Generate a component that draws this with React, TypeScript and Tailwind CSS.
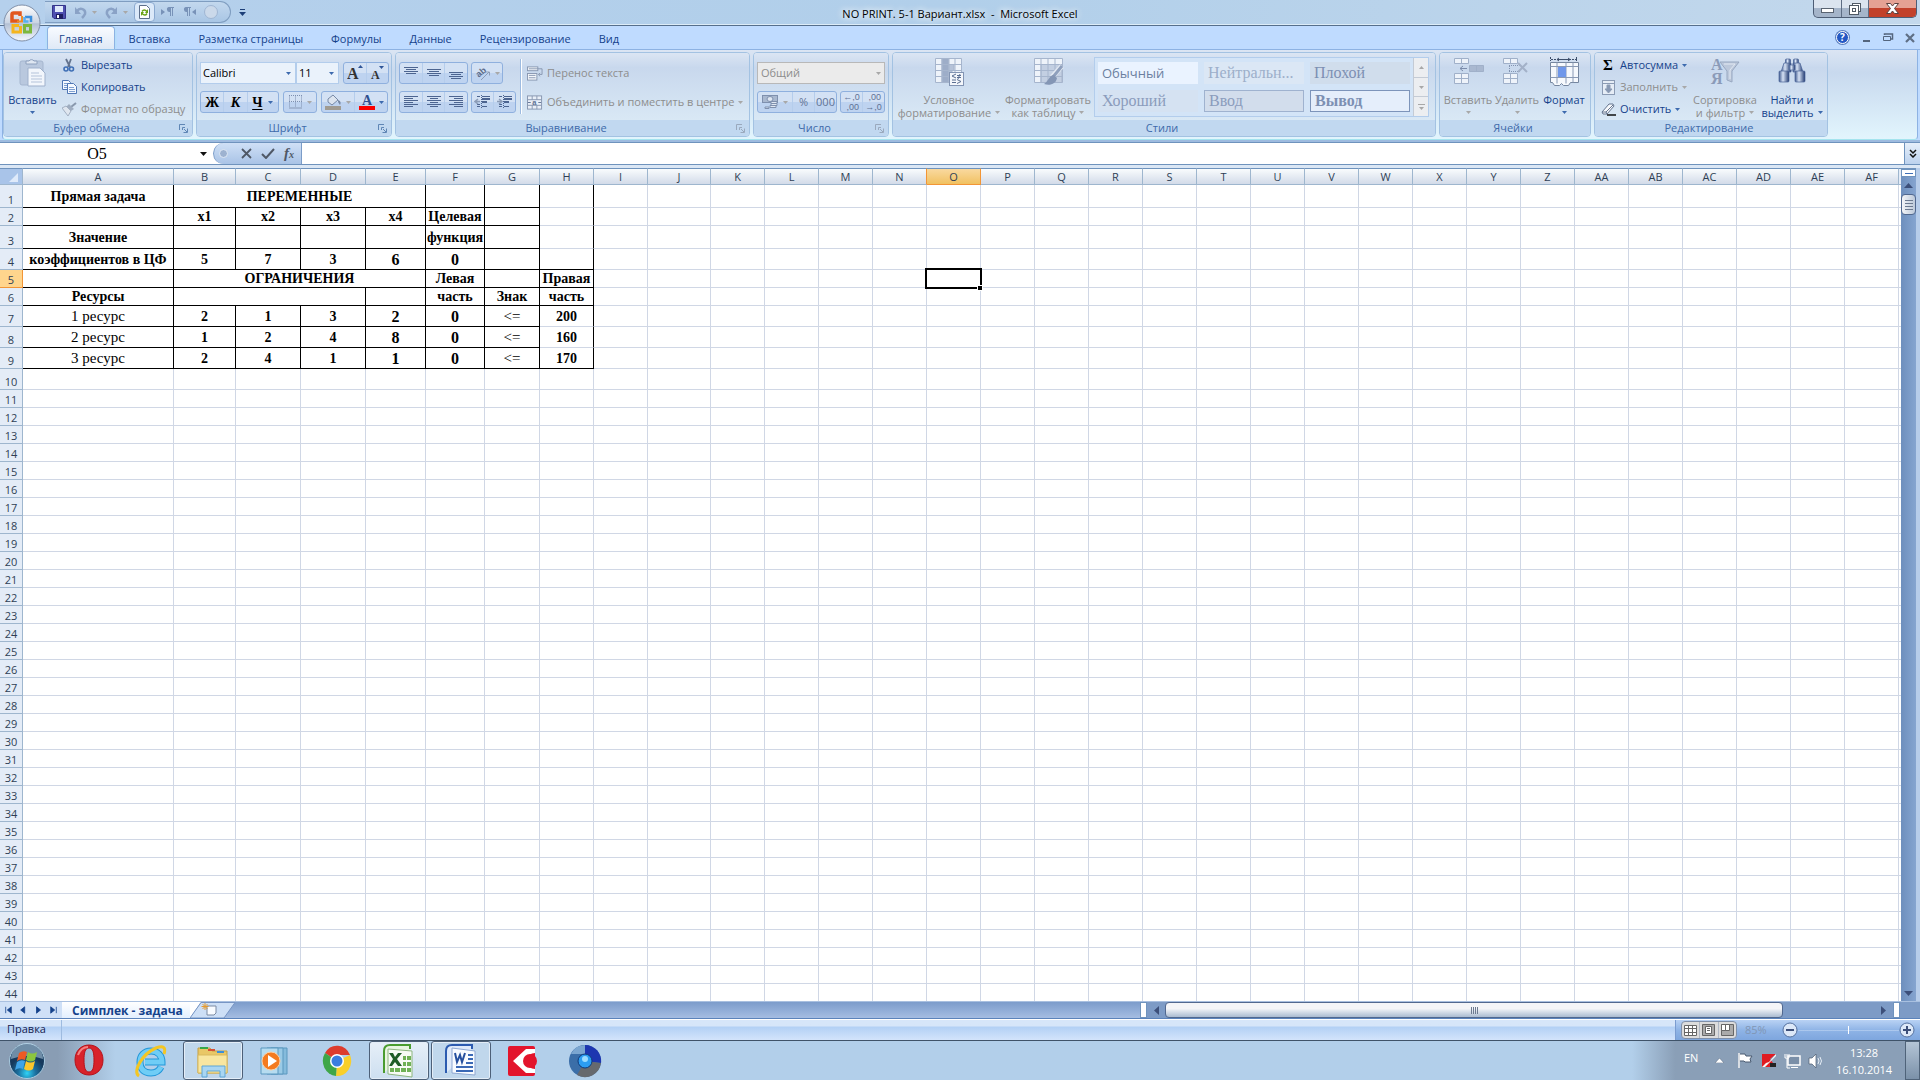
import React, { useState } from "react";
import { clsx } from "clsx";

type CellData = {
  text?: string;
  span?: number;
  r?: boolean;
  b?: boolean;
  plain?: boolean;
  big?: boolean;
};

const COLUMNS = [
  "A", "B", "C", "D", "E", "F", "G", "H", "I", "J", "K", "L", "M", "N", "O", "P",
  "Q", "R", "S", "T", "U", "V", "W", "X", "Y", "Z", "AA", "AB", "AC", "AD", "AE", "AF",
];

const COLUMN_WIDTHS: Record<string, string> = {
  A: "w-[151px]",
  B: "w-[62px]",
  C: "w-[65px]",
  D: "w-[65px]",
  E: "w-[60px]",
  F: "w-[59px]",
  G: "w-[55px]",
  J: "w-[63px]",
};

const ROW_HEIGHTS: Record<number, string> = {
  1: "h-[23px]",
  3: "h-[23px]",
  4: "h-[21px]",
  7: "h-[21px]",
  8: "h-[21px]",
  9: "h-[21px]",
  10: "h-[21px]",
};

// boxed cell: black line on the right and at the bottom
const box = (text = "", extra: Partial<CellData> = {}): CellData => ({ text, r: true, b: true, ...extra });

const DATA: Record<number, CellData[]> = {
  1: [box("Прямая задача"), box("ПЕРЕМЕННЫЕ", { span: 4 }), box(), box(), { r: true }],
  2: [box(), box("x1"), box("x2"), box("x3"), box("x4"), box("Целевая"), box(), { r: true }],
  3: [box("Значение"), box(), box(), box(), box(), box("функция"), box(), { r: true }],
  4: [box("коэффициентов в ЦФ"), box("5"), box("7"), box("3"), box("6", { big: true }), box("0", { big: true }), box(), box()],
  5: [box(), box("ОГРАНИЧЕНИЯ", { span: 4 }), box("Левая"), box(), box("Правая")],
  6: [box("Ресурсы"), box("", { span: 3 }), box(), box("часть"), box("Знак"), box("часть")],
  7: [box("1 ресурс", { plain: true }), box("2"), box("1"), box("3"), box("2", { big: true }), box("0", { big: true }), box("<=", { plain: true }), box("200", { b: false })],
  8: [box("2 ресурс", { plain: true }), box("1"), box("2"), box("4"), box("8", { big: true }), box("0", { big: true }), box("<=", { plain: true }), box("160", { b: false })],
  9: [box("3 ресурс", { plain: true }), box("2"), box("4"), box("1"), box("1", { big: true }), box("0", { big: true }), box("<=", { plain: true }), box("170")],
};

const ROWS = Array.from({ length: 44 }, (_, i) => i + 1);

const TABS = ["Главная", "Вставка", "Разметка страницы", "Формулы", "Данные", "Рецензирование", "Вид"];

/* ---------- small shared pieces ---------- */

const Caret: React.FC<{ off?: boolean }> = ({ off }) => (
  <svg width="5" height="3" viewBox="0 0 5 3" className="shrink-0">
    <path d="M0 0h5L2.5 3z" fill={off ? "#a8a8a8" : "#3d6aae"} />
  </svg>
);

const Frame: React.FC<{ className?: string; children: React.ReactNode }> = ({ className, children }) => (
  <div
    className={clsx(
      "flex h-[22px] divide-x divide-[#b5cdec] rounded-[3px] border border-[#8fb0de] bg-linear-to-b from-[#d3e1f4] from-50% to-[#bed3f0] to-50%",
      className
    )}
  >
    {children}
  </div>
);

const FrameButton: React.FC<{ label: string; className?: string; children: React.ReactNode }> = ({ label, className, children }) => (
  <button type="button" aria-label={label} className={clsx("flex flex-1 items-center justify-center gap-1", className)}>
    {children}
  </button>
);

const Group: React.FC<{ title: string; launcher?: boolean; off?: boolean; className: string; children: React.ReactNode }> = ({
  title,
  launcher,
  off,
  className,
  children,
}) => (
  <section
    className={clsx(
      "flex h-[85px] shrink-0 flex-col overflow-hidden rounded-[4px] border border-[#a3c2e2] bg-linear-to-b from-[#dce6f4] to-[#d8e8f5] shadow-[inset_1px_1px_0_#e9f1fa]",
      className
    )}
  >
    <div className="flex flex-1 bg-linear-to-b from-[#dbe5f3] via-[#c8d8ed] via-22% to-[#d9e8f5]">{children}</div>
    <div className="flex h-4 items-center bg-[#c1d8f0] pr-1">
      <h2 className="flex-1 text-center text-[11px] leading-4 text-[#3e6aaa]">{title}</h2>
      {launcher && (
        <button type="button" aria-label={title}>
          <svg width="9" height="9" viewBox="0 0 9 9" fill="none" stroke={off ? "#9aa9bd" : "#5f86b5"}>
            <path d="M.5 6V.5H6M3.500 6V3.500H6" />
            <path d="M5 5l3 3M8.500 4.500v4h-4" />
          </svg>
        </button>
      )}
    </div>
  </section>
);

const SmallCommand: React.FC<{ icon: React.ReactNode; text: string; off?: boolean; caret?: boolean }> = ({ icon, text, off, caret }) => (
  <button
    type="button"
    className={clsx("flex h-[22px] items-center gap-1 whitespace-nowrap text-[11px]", off ? "text-[#8d8d8d]" : "text-[#15428b]")}
  >
    <span className="flex w-4 shrink-0 justify-center">{icon}</span>
    {text}
    {caret && <Caret off={off} />}
  </button>
);

const BigCommand: React.FC<{ icon: React.ReactNode; lines: string[]; off?: boolean; className: string }> = ({
  icon,
  lines,
  off,
  className,
}) => (
  <button
    type="button"
    className={clsx(
      "flex flex-col items-center whitespace-nowrap pt-1 text-[11px] leading-[13px]",
      off ? "text-[#8d8d8d]" : "text-[#15428b]",
      className
    )}
  >
    <span className="flex h-9 items-start">{icon}</span>
    <span>{lines[0]}</span>
    <span className="flex h-[13px] items-center gap-1">
      {lines[1]}
      <Caret off={off} />
    </span>
  </button>
);

/* ---------- ribbon icons ---------- */

const PasteIcon = () => (
  <svg width="28" height="32" viewBox="0 0 28 32">
    <rect x="1" y="4" width="23" height="24" rx="2" fill="#b9c8de" stroke="#a5b6cf" />
    <path d="M7 7V4h3a3 3 0 0 1 5 0h3v3z" fill="#dfe7f2" stroke="#8ea0bd" />
    <path d="M9 11h12l5 5v13H9z" fill="#f2f6fc" stroke="#9fb1cc" />
    <path d="M12 16h8M12 19h11M12 22h11M12 25h11" stroke="#b4c3da" />
  </svg>
);

const ScissorsIcon = () => (
  <svg width="12" height="15" viewBox="0 0 12 15" fill="none">
    <path d="M3 1l4 8M8 1L5 9" stroke="#63738e" strokeWidth="1.800" />
    <circle cx="3" cy="11" r="2" stroke="#3f6fb5" strokeWidth="1.600" />
    <circle cx="8.500" cy="11" r="2" stroke="#3f6fb5" strokeWidth="1.600" />
  </svg>
);

const CopyIcon = () => (
  <svg width="15" height="14" viewBox="0 0 15 14" fill="#f5f9ff" stroke="#4f77b5">
    <path d="M.5.5h6l2 2v7h-8z" />
    <path d="M2 3.500h4M2 5.500h4M2 7.500h4" stroke="#7fa0d0" />
    <path d="M5.500 3.500h6l3 3v7h-9z" />
    <path d="M7 7.500h5M7 9.500h6M7 11.500h6" stroke="#7fa0d0" />
  </svg>
);

const BrushIcon = () => (
  <svg width="15" height="14" viewBox="0 0 15 14">
    <path d="M14 1l-5 4" stroke="#8998ad" strokeWidth="2" />
    <path d="M7 2l5 5-3 2-5-4z" fill="#9fadc0" />
    <path d="M0 6l4-2 5 5-3 5z" fill="#dfe6ef" stroke="#a3b0c2" />
  </svg>
);

const LinesIcon: React.FC<{ d: string }> = ({ d }) => (
  <svg width="16" height="16" viewBox="0 0 16 16" fill="none" stroke="#4c6490">
    <path d={d} />
  </svg>
);

const ALIGN = {
  top: "M1 2.500h14M3 4.500h10M1 6.500h14M3 8.500h10",
  middle: "M1 4.500h14M3 6.500h10M1 8.500h14M3 10.500h10",
  bottom: "M1 7.500h14M3 9.500h10M1 11.500h14M3 13.500h10",
  left: "M1 2.500h14M1 4.500h9M1 6.500h14M1 8.500h9M1 10.500h14M1 12.500h9",
  center: "M1 2.500h14M4 4.500h8M1 6.500h14M4 8.500h8M1 10.500h14M4 12.500h8",
  right: "M1 2.500h14M6 4.500h9M1 6.500h14M6 8.500h9M1 10.500h14M6 12.500h9",
};

const IndentIcon: React.FC<{ back?: boolean }> = ({ back }) => (
  <svg width="17" height="16" viewBox="0 0 17 16" fill="none" stroke="#4c6490">
    <path d="M3 2.500h3M8 2.500h8M8 12.500h5M3 12.500h3M3 10.500h3" />
    <path d="M8 5h8M8 8h5" strokeWidth="2" />
    <path d="M7.500 1v14" strokeDasharray="1 1" />
    <path d={back ? "M1 7.500h5M4 5L1 7.500 4 10" : "M1 7.500h5M3 5l3 2.500L3 10"} stroke="#8c9db8" strokeWidth="1.500" />
  </svg>
);

const OrientationIcon = () => (
  <svg width="16" height="16" viewBox="0 0 16 16" className="overflow-visible">
    <text x="1" y="11" fontSize="9" fontWeight="700" fill="#5c6d8c" fontFamily="Liberation Sans, sans-serif" transform="rotate(-40 5 8)">
      ab
    </text>
    <path d="M6 15l8-8M11 7h3.500v3.500" fill="none" stroke="#8c9db8" />
  </svg>
);

const WrapIcon = () => (
  <svg width="17" height="15" viewBox="0 0 17 15" fill="none" stroke="#8796b0">
    <rect x=".5" y=".5" width="11" height="4" fill="#f4f7fb" />
    <path d="M2 2.500h14v6h-3M14 7l-2 1.500 2 2" />
    <rect x=".5" y="7.500" width="10" height="7" fill="#f4f7fb" />
    <path d="M2 9.500h7M2 12h7" />
  </svg>
);

const MergeIcon = () => (
  <svg width="17" height="15" viewBox="0 0 17 15" fill="none" stroke="#8796b0">
    <rect x=".5" y=".5" width="15" height="14" fill="#e9eff8" />
    <path d="M.5 4.500h15M.5 10.500h15M5.500.5v4M10.500.5v4M5.500 10.500v4M10.500 10.500v4" />
    <text x="5.500" y="10" fontSize="8" fontWeight="700" fill="#5f7294" stroke="none" fontFamily="Liberation Sans, sans-serif">
      a
    </text>
    <path d="M1 7.500h3M12 7.500h3" stroke="#5f7294" />
  </svg>
);

const MoneyIcon = () => (
  <svg width="17" height="16" viewBox="0 0 17 16" stroke="#7f90ae" className="shrink-0">
    <rect x=".5" y="1.500" width="15" height="7" fill="#a9b8cf" />
    <ellipse cx="8" cy="5" rx="3" ry="2.500" fill="#dfe7f2" />
    <path d="M9 7.500h6v2H9zM9 9.500h6v2H9zM8 11.500h6v2H8zM3 13h4v1.500H3z" fill="#dfe7f2" />
  </svg>
);

const ConditionalIcon = () => (
  <svg width="31" height="30" viewBox="0 0 31 30" stroke="#a6b5cd">
    <path d="M1.500 1.500h26v24h-26z" fill="#eef3fa" />
    <path d="M8 1.500h7v24H8z" fill="#9dadc8" />
    <path d="M15 7.500h5v6h-5zM15 13.500h3v6h-3z" fill="#b5c2d8" />
    <path d="M1.500 7.500h26M1.500 13.500h26M1.500 19.500h26M8 1.500v24M14.500 1.500v24M21 1.500v24" fill="none" />
    <rect x="15.500" y="15.500" width="14" height="13" fill="#f3f6fb" stroke="#8294b3" />
    <path d="M22 17l-4 2 4 2M18 23h4M18 25.500h4M23 18.500h4M23 20.500h4M26 17l-2 5M23 22.500l4 2-4 2" fill="none" stroke="#5a6e92" />
  </svg>
);

const TableFormatIcon = () => (
  <svg width="31" height="30" viewBox="0 0 31 30" stroke="#a6b5cd">
    <path d="M1.500 1.500h28v24h-28z" fill="#eef3fa" />
    <path d="M8 7.500h21v18H8z" fill="#c3cfe2" />
    <path d="M1.500 7.500h28M1.500 13.500h28M1.500 19.500h28M8 1.500v24M15 1.500v24M22 1.500v24" fill="none" />
    <path d="M29 9L19 20" stroke="#e4eaf3" strokeWidth="5" />
    <path d="M29 9L20 20" stroke="#8fa0bd" strokeWidth="3" />
    <path d="M21 18c-5 0-5 6-10 9 6 2 12 0 13-6z" fill="#8496b5" stroke="none" />
  </svg>
);

const CellsIcon: React.FC<{ remove?: boolean }> = ({ remove }) => (
  <svg width="31" height="30" viewBox="0 0 31 30" fill="#eef3fa" stroke="#a0b0c9">
    <path d="M1.500 1.500h14v5h-14zM8.500 1.500v5M1.500 16.500h14v10h-14zM1.500 21.500h14M8.500 16.500v10" />
    {remove ? (
      <>
        <path d="M7 8.500h12M7 14.500h12M7.500 9v5" fill="none" strokeDasharray="1 1" stroke="#8192b0" />
        <path d="M16 6l9 9M25 6l-9 9" stroke="#a3b1c8" strokeWidth="2" />
      </>
    ) : (
      <>
        <path d="M16.500 8.500h14v6h-14zM23.500 8.500v6" fill="#a9b8d0" />
        <path d="M7 11.500h7M10 9l-3 2.500 3 2.500" fill="none" stroke="#7b8cab" />
      </>
    )}
  </svg>
);

const FormatIcon = () => (
  <svg width="31" height="31" viewBox="0 0 31 31">
    <path d="M1.500 0v4M27.500 0v4M2 2.500h26" stroke="#3d4e6a" strokeDasharray="2 1" fill="none" />
    <path d="M9 2.500h12M10 1l-2 1.500L10 4M19 1l2 1.500L19 4" stroke="#3d4e6a" fill="none" />
    <path d="M1.500 5.500h28v20h-8l-2 3h-5l-2-2-2 2h-5l-2-3h-2z" fill="#f6f9fd" stroke="#75869f" />
    <path d="M8 5.500v21M17 5.500v21M24 5.500v20M1.500 9.500h28M1.500 20.500h28" stroke="#8a9ab5" />
    <rect x="9" y="10" width="8" height="10" fill="#6f97ea" />
  </svg>
);

const FillIcon = () => (
  <svg width="13" height="15" viewBox="0 0 13 15" stroke="#8b9bb4">
    <rect x=".5" y=".5" width="12" height="14" fill="#e6edf6" />
    <path d="M.5 3.500h12" />
    <path d="M5 5h3v4h2l-3.500 4L3 9h2z" fill="#8798b3" />
  </svg>
);

const EraserIcon = () => (
  <svg width="15" height="13" viewBox="0 0 15 13">
    <path d="M1 9l7-8h4l1 2-7 8H2z" fill="#f7f9fc" stroke="#65758f" />
    <path d="M1 9h4l1 2M5 9l7-7" stroke="#65758f" fill="none" />
    <path d="M6 12h9" stroke="#111" strokeWidth="1.500" />
  </svg>
);

const SortIcon = () => (
  <svg width="30" height="30" viewBox="0 0 30 30">
    <g fill="#8b9bb8" fontFamily="Liberation Serif, serif" fontWeight="700" fontSize="16">
      <text x="1" y="13">А</text>
      <text x="1" y="27">Я</text>
    </g>
    <path d="M10 5h19l-7 9v11l-5-2v-9z" fill="#bcc8db" stroke="#98a8c1" />
    <path d="M14 7h11l-5 6v9" fill="none" stroke="#e1e8f2" />
  </svg>
);

const BinocularsIcon = () => (
  <svg width="30" height="28" viewBox="0 0 30 28">
    <defs>
      <linearGradient id="tube">
        <stop offset="0" stopColor="#3f5a8e" />
        <stop offset=".4" stopColor="#d6e2f5" />
        <stop offset="1" stopColor="#213a70" />
      </linearGradient>
    </defs>
    <g fill="url(#tube)" stroke="#4b649a" strokeWidth=".7">
      <rect x="8.500" y="2" width="5" height="5" rx="1" />
      <rect x="16.500" y="2" width="5" height="5" rx="1" />
      <path d="M7 6h7v9H4z" />
      <path d="M16 6h7l3 9H16z" />
      <path d="M12 8h6v5h-6z" />
      <rect x="2" y="14" width="10" height="11" rx="1" />
      <rect x="18" y="14" width="10" height="11" rx="1" />
    </g>
  </svg>
);

const OfficeButton = () => (
  <button type="button" aria-label="Office" className="absolute top-1 left-[3px]">
    <svg width="38" height="38" viewBox="0 0 38 38">
      <defs>
        <linearGradient id="orb" x2="0" y2="1">
          <stop offset="0" stopColor="#ffffff" />
          <stop offset=".5" stopColor="#c9d3e2" />
          <stop offset=".52" stopColor="#b3c0d4" />
          <stop offset="1" stopColor="#f4f8ff" />
        </linearGradient>
      </defs>
      <circle cx="19" cy="19" r="18" fill="url(#orb)" stroke="#7f8fa8" />
      <g fill="none">
        <path d="M16 17H9v-6.500Q9 9 10.500 9H17v3" stroke="#e2571e" strokeWidth="3.500" />
        <path d="M14 17.500h5V12" stroke="#f08a24" strokeWidth="2" />
        <path d="M22 13h6v5" stroke="#3c8fdc" strokeWidth="2.500" />
        <path d="M21.500 13v4.500h4" stroke="#57aef0" strokeWidth="2.500" />
        <path d="M16 21.500h-6V28h7.500v-6" stroke="#f5b51d" strokeWidth="3" />
        <path d="M21.500 21.500h6v6.500h-6z" stroke="#7cb83e" strokeWidth="3" />
      </g>
    </svg>
  </button>
);

/* ---------- title bar ---------- */

const QuickAccess = () => (
  <div className="flex h-[22px] items-center rounded-r-full border border-l-0 border-[#7f9dc0] bg-linear-to-b from-[#c3d8ee] to-[#a9c6e5] pr-3">
    <button type="button" aria-label="Сохранить" className="ml-[7px]">
      <svg width="14" height="14" viewBox="0 0 14 14">
        <path d="M.5.500h13v13H2L.500 12z" fill="#4e4fb0" stroke="#34348a" />
        <rect x="3" y="1" width="8" height="6" fill="#dfe9fb" />
        <rect x="4" y="9" width="7" height="5" fill="#1d1d60" />
        <rect x="5" y="10" width="2" height="3" fill="#fff" />
      </svg>
    </button>
    <button type="button" aria-label="Отменить" className="ml-2 flex items-center gap-[5px]">
      <svg width="13" height="13" viewBox="0 0 13 13" fill="none">
        <path d="M3 5c3-4 9-2 8 3-1 2-2 3-3 4" stroke="#8aa2c6" strokeWidth="2.500" />
        <path d="M1 1v7h6z" fill="#8aa2c6" />
      </svg>
      <Caret off />
    </button>
    <button type="button" aria-label="Вернуть" className="ml-2 flex items-center gap-[5px]">
      <svg width="13" height="13" viewBox="0 0 13 13" fill="none">
        <path d="M10 5C7 1 1 3 2 8c1 2 2 3 3 4" stroke="#8aa2c6" strokeWidth="2.500" />
        <path d="M12 1v7H6z" fill="#8aa2c6" />
      </svg>
      <Caret off />
    </button>
    <button type="button" aria-label="Обновить" className="ml-[6px] flex h-5 w-[21px] items-center justify-center rounded-sm border border-[#8aa9d0] bg-[#dbe9f9]">
      <svg width="11" height="14" viewBox="0 0 11 14" fill="none">
        <path d="M.5.500h7l3 3v10H.500z" fill="#fff" stroke="#5d6f8b" />
        <path d="M3 6.500q2-3 5 0M8 8.500q-2 3-5 0" stroke="#6aa313" strokeWidth="1.500" />
        <path d="M9 4v4H6zM2 11V7h3z" fill="#6aa313" />
      </svg>
    </button>
    <button type="button" aria-label="Слева направо" className="ml-[6px]">
      <svg width="13" height="10" viewBox="0 0 13 10" fill="#7892b8">
        <path d="M0 2v6l4-3zM8 0h5v1h-1v8h-1V1h-1v8H9V5a2.500 2.500 0 0 1-1-5z" />
      </svg>
    </button>
    <button type="button" aria-label="Справа налево" className="ml-[9px]">
      <svg width="13" height="10" viewBox="0 0 13 10" fill="#7892b8">
        <path d="M13 2v6L9 5zM3 0h5v1H7v8H6V1H5v8H4V5a2.500 2.500 0 0 1-1-5z" />
      </svg>
    </button>
    <span className="ml-2 size-[14px] rounded-full border border-[#a0b6d3] bg-[#cbd9ea]" />
  </div>
);

const TitleBar = () => (
  <header className="relative grid h-[26px] grid-cols-[1fr_auto_1fr] border-b border-[#566f8c] bg-linear-to-r from-[#b5d0ec] via-[#b1cfea] to-[#c3d8ec] shadow-[inset_0_-1px_0_#dcecf8]">
    <div className="flex items-center pb-px pl-[45px]">
      <QuickAccess />
      <button type="button" aria-label="Настройка панели быстрого доступа" className="ml-2">
        <svg width="7" height="7" viewBox="0 0 7 7">
          <path d="M1 .500h5" stroke="#1d3f78" />
          <path d="M0 3h7L3.500 7z" fill="#1d3f78" />
        </svg>
      </button>
    </div>
    <h1 className="pt-[6px] text-[11px] leading-4 text-black [text-shadow:0_0_6px_#fff,0_0_8px_#fff]">
      NO PRINT. 5-1 Вариант.xlsx&nbsp; -&nbsp; Microsoft Excel
    </h1>
    <div className="flex justify-end pr-[3px]">
      <div className="flex h-[18px] divide-x divide-[#5d6d84] overflow-hidden rounded-b-[5px] border border-t-0 border-[#4d5d75] bg-linear-to-b from-[#dbe4ef] from-45% to-[#a5b5ca] to-50%">
        <button type="button" aria-label="Свернуть" className="flex w-7 items-center justify-center pt-1">
          <svg width="13" height="5" viewBox="0 0 13 5">
            <rect x=".5" y=".5" width="12" height="4" fill="#fff" stroke="#5a6472" />
          </svg>
        </button>
        <button type="button" aria-label="Развернуть" className="flex w-[27px] items-center justify-center">
          <svg width="13" height="12" viewBox="0 0 13 12" fill="#fff" stroke="#4f5965">
            <rect x="3.500" y=".5" width="8" height="8" />
            <rect x=".5" y="2.500" width="9" height="9" />
            <rect x="3.500" y="5.500" width="3" height="3" />
          </svg>
        </button>
        <button
          type="button"
          aria-label="Закрыть"
          className="flex w-[47px] items-center justify-center bg-linear-to-b from-[#e5a294] from-45% to-[#c2412b] to-50%"
        >
          <svg width="13" height="11" viewBox="0 0 13 11">
            <path d="M.5.500h4l2 2.500 2-2.500h4l-4 5 4 5h-4l-2-2.500-2 2.500h-4l4-5z" fill="#fff" stroke="#59413f" />
          </svg>
        </button>
      </div>
    </div>
    <OfficeButton />
  </header>
);

const TabStrip: React.FC<{ active: string; onSelect: (tab: string) => void }> = ({ active, onSelect }) => (
  <nav className="flex h-6 items-end border-b border-[#8db2e3] bg-[#bfdbff] pl-[47px]">
    {TABS.map(tab => (
      <button
        key={tab}
        type="button"
        onClick={() => onSelect(tab)}
        className={clsx(
          "flex h-[23px] items-center rounded-t-[4px] border border-b-0 px-[11px] pt-px text-[11px] leading-4 text-[#15428b]",
          tab === active ? "border-[#8db2e3] bg-linear-to-b from-[#f8fbff] to-[#dfe9f6] shadow-[0_0_3px_#a8e3f0]" : "mx-[2px] border-transparent"
        )}
      >
        {tab}
      </button>
    ))}
    <div className="ml-auto flex h-[23px] items-center gap-[11px] pr-[5px]">
      <button type="button" aria-label="Справка" className="mr-[2px] flex size-[13px] items-center justify-center rounded-full border border-white bg-[#2458c4] text-[10px] font-bold text-white ring-1 ring-[#5b7fc0]">
        ?
      </button>
      <button type="button" aria-label="Свернуть окно книги">
        <svg width="9" height="10" viewBox="0 0 9 10">
          <path d="M1 8h7" stroke="#54657d" strokeWidth="2" />
        </svg>
      </button>
      <button type="button" aria-label="Восстановить окно книги">
        <svg width="12" height="10" viewBox="0 0 12 10" fill="none" stroke="#54657d">
          <path d="M2.500 2V1h8v5H9" strokeWidth="1.500" />
          <path d="M1.500 3.500h7v4h-7z" />
        </svg>
      </button>
      <button type="button" aria-label="Закрыть окно книги">
        <svg width="10" height="10" viewBox="0 0 10 10">
          <path d="M1 1l8 8M9 1L1 9" stroke="#5f6f85" strokeWidth="2.200" />
        </svg>
      </button>
    </div>
  </nav>
);

/* ---------- ribbon ---------- */

const ClipboardGroup = () => (
  <Group title="Буфер обмена" launcher className="w-[190px]">
    <BigCommand icon={<PasteIcon />} lines={["Вставить"]} className="w-[57px]" />
    <div className="flex flex-col pt-px">
      <SmallCommand icon={<ScissorsIcon />} text="Вырезать" />
      <SmallCommand icon={<CopyIcon />} text="Копировать" />
      <SmallCommand icon={<BrushIcon />} text="Формат по образцу" off />
    </div>
  </Group>
);

const FontGroup = () => (
  <Group title="Шрифт" launcher className="w-[196px]">
    <div className="flex flex-col gap-[7px] pt-[9px] pl-[3px]">
      <div className="flex gap-1">
        <div className="flex">
          <div className="flex h-[22px] w-24 items-center border border-[#b3cdec] bg-[#eaf2fb] pr-1">
            <input aria-label="Шрифт" defaultValue="Calibri" className="w-full min-w-0 bg-transparent pl-[2px] text-[11px] text-black outline-none" />
            <Caret />
          </div>
          <div className="flex h-[22px] w-[43px] items-center border border-[#b3cdec] bg-[#eaf2fb] pr-1">
            <input aria-label="Размер шрифта" defaultValue="11" className="w-full min-w-0 bg-transparent pl-[2px] text-[11px] text-black outline-none" />
            <Caret />
          </div>
        </div>
        <Frame className="w-[46px]">
          <FrameButton label="Увеличить размер">
            <svg width="16" height="16" viewBox="0 0 16 16">
              <text x="0" y="14" fontSize="16" fontWeight="700" fill="#333" fontFamily="Liberation Serif, serif">A</text>
              <path d="M11 3l2.500-3L16 3z" fill="#2f5597" />
            </svg>
          </FrameButton>
          <FrameButton label="Уменьшить размер">
            <svg width="15" height="16" viewBox="0 0 15 16">
              <text x="1" y="14" fontSize="12" fontWeight="700" fill="#333" fontFamily="Liberation Serif, serif">A</text>
              <path d="M9 1h5l-2.500 3z" fill="#2f5597" />
            </svg>
          </FrameButton>
        </Frame>
      </div>
      <div className="flex gap-1 font-['Liberation_Serif',serif] text-[14px] font-bold text-black">
        <Frame className="w-[79px]">
          <FrameButton label="Полужирный">Ж</FrameButton>
          <FrameButton label="Курсив" className="italic">К</FrameButton>
          <FrameButton label="Подчеркнутый" className="px-1">
            <span className="mr-[2px] underline underline-offset-2">Ч</span>
            <Caret />
          </FrameButton>
        </Frame>
        <Frame className="w-[34px]">
          <FrameButton label="Границы">
            <svg width="14" height="14" viewBox="0 0 14 14" fill="none" stroke="#7c8fb0">
              <path d="M.5.500v12M6.500.500v12M12.500.500v12M0 .500h13M0 6.500h13" strokeDasharray="1 1" />
              <path d="M0 13h13" stroke="#8798b5" />
            </svg>
            <Caret off />
          </FrameButton>
        </Frame>
        <Frame className="w-[67px]">
          <FrameButton label="Цвет заливки">
            <svg width="17" height="16" viewBox="0 0 17 16">
              <path d="M3 5l5-4 5 5-6 5-4-3z" fill="#dce4ef" stroke="#7688a5" />
              <path d="M13 6c3 1 3 3 2 5l-2-3z" fill="#7688a5" />
              <rect y="12" width="16" height="4" fill="#a09b92" />
            </svg>
            <Caret off />
          </FrameButton>
          <FrameButton label="Цвет текста">
            <svg width="16" height="16" viewBox="0 0 16 16" className="overflow-visible">
              <text x="3" y="11" fontSize="14" fontWeight="700" fill="#2f4f8f" fontFamily="Liberation Serif, serif">A</text>
              <rect y="12" width="16" height="4" fill="#fb0000" />
            </svg>
            <Caret />
          </FrameButton>
        </Frame>
      </div>
    </div>
  </Group>
);

const AlignmentGroup = () => (
  <Group title="Выравнивание" launcher off className="w-[355px]">
    <div className="flex flex-col gap-[7px] pt-[9px] pl-[3px]">
      <div className="flex gap-[3px]">
        <Frame className="w-[69px]">
          <FrameButton label="По верхнему краю"><LinesIcon d={ALIGN.top} /></FrameButton>
          <FrameButton label="По середине"><LinesIcon d={ALIGN.middle} /></FrameButton>
          <FrameButton label="По нижнему краю"><LinesIcon d={ALIGN.bottom} /></FrameButton>
        </Frame>
        <Frame className="w-8">
          <FrameButton label="Ориентация"><OrientationIcon /><Caret off /></FrameButton>
        </Frame>
      </div>
      <div className="flex gap-[3px]">
        <Frame className="w-[69px]">
          <FrameButton label="По левому краю"><LinesIcon d={ALIGN.left} /></FrameButton>
          <FrameButton label="По центру"><LinesIcon d={ALIGN.center} /></FrameButton>
          <FrameButton label="По правому краю"><LinesIcon d={ALIGN.right} /></FrameButton>
        </Frame>
        <Frame className="w-[45px]">
          <FrameButton label="Уменьшить отступ"><IndentIcon back /></FrameButton>
          <FrameButton label="Увеличить отступ"><IndentIcon /></FrameButton>
        </Frame>
      </div>
    </div>
    <div className="mt-[6px] mr-[5px] ml-1 h-[55px] w-[2px] border-l border-[#9ebbe0] bg-white" />
    <div className="flex flex-col gap-[7px] pt-[9px]">
      <SmallCommand icon={<WrapIcon />} text="Перенос текста" off />
      <SmallCommand icon={<MergeIcon />} text="Объединить и поместить в центре" off caret />
    </div>
  </Group>
);

const NumberGroup = () => (
  <Group title="Число" launcher off className="w-[136px]">
    <div className="flex flex-col gap-[7px] pt-[9px] pl-[3px]">
      <div className="relative flex w-32 items-center">
        <select aria-label="Числовой формат" className="h-[22px] w-full appearance-none border border-[#b8b8b8] bg-[#ebebeb] pl-[3px] text-[11px] text-[#8d8d8d]">
          <option>Общий</option>
        </select>
        <span className="pointer-events-none absolute right-1"><Caret off /></span>
      </div>
      <div className="flex gap-[3px] text-[11px] text-[#5f7294]">
        <Frame className="w-20">
          <FrameButton label="Денежный" className="px-1"><MoneyIcon /><Caret off /></FrameButton>
          <FrameButton label="Процентный">%</FrameButton>
          <FrameButton label="С разделителями">000</FrameButton>
        </Frame>
        <Frame className="w-[45px] font-['Liberation_Sans',sans-serif] text-[9px] leading-[10px]">
          <FrameButton label="Увеличить разрядность">
            <span>←,0<br />&nbsp;,00</span>
          </FrameButton>
          <FrameButton label="Уменьшить разрядность">
            <span>&nbsp;,00<br />→,0</span>
          </FrameButton>
        </Frame>
      </div>
    </div>
  </Group>
);

const STYLES: { name: string; className: string }[] = [
  { name: "Обычный", className: "bg-[#eaf3ff] font-['Open_Sans',sans-serif] text-[13px] text-[#6b7f9f]" },
  { name: "Нейтральн...", className: "bg-[#dbe7f5] text-[#9dafca]" },
  { name: "Плохой", className: "bg-[#d0ddec] text-[#7d90b3]" },
  { name: "Хороший", className: "bg-[#d5e2f2] text-[#8b9cbc]" },
  { name: "Ввод", className: "border border-[#9fb2cf] bg-[#d2ddec] text-[#8b9cbc]" },
  { name: "Вывод", className: "border border-[#7d94ba] bg-[#e5eefb] font-bold text-[#7d90b3]" },
];

const StylesGroup = () => (
  <Group title="Стили" className="w-[544px]">
    <BigCommand icon={<ConditionalIcon />} lines={["Условное", "форматирование"]} off className="w-[112px]" />
    <BigCommand icon={<TableFormatIcon />} lines={["Форматировать", "как таблицу"]} off className="w-[86px]" />
    <div className="mt-1 ml-[3px] flex h-[60px] border border-[#b3cdec] bg-[#d3e4f7]">
      <div className="grid grid-cols-3 gap-x-[6px] gap-y-[6px] px-[3px] py-1 font-['Liberation_Serif',serif] text-[16px]">
        {STYLES.map(style => (
          <button key={style.name} type="button" className={clsx("h-[22px] w-[100px] px-1 text-left leading-5", style.className)}>
            {style.name}
          </button>
        ))}
      </div>
      <div className="flex w-[15px] flex-col divide-y divide-[#c4cbd5] border-l border-[#c4cbd5] bg-[#eceef1]">
        <button type="button" aria-label="Вверх" className="flex flex-1 items-center justify-center"><span className="rotate-180"><Caret off /></span></button>
        <button type="button" aria-label="Вниз" className="flex flex-1 items-center justify-center"><Caret off /></button>
        <button type="button" aria-label="Дополнительно" className="flex flex-1 flex-col items-center justify-center gap-[2px]">
          <span className="h-px w-[7px] bg-[#a8a8a8]" />
          <Caret off />
        </button>
      </div>
    </div>
  </Group>
);

const CellsGroup = () => (
  <Group title="Ячейки" className="w-[152px]">
    <div className="flex pl-[3px]">
      <BigCommand icon={<CellsIcon />} lines={["Вставить"]} off className="w-[50px]" />
      <BigCommand icon={<CellsIcon remove />} lines={["Удалить"]} off className="w-12" />
      <BigCommand icon={<FormatIcon />} lines={["Формат"]} className="w-[46px]" />
    </div>
  </Group>
);

const EditingGroup = () => (
  <Group title="Редактирование" className="w-[234px]">
    <div className="flex w-[94px] flex-col pt-px pl-[5px]">
      <SmallCommand icon={<span className="font-['Liberation_Serif',serif] text-[15px] font-bold text-black">Σ</span>} text="Автосумма" caret />
      <SmallCommand icon={<FillIcon />} text="Заполнить" off caret />
      <SmallCommand icon={<EraserIcon />} text="Очистить" caret />
    </div>
    <BigCommand icon={<SortIcon />} lines={["Сортировка", "и фильтр"]} off className="w-[72px]" />
    <BigCommand icon={<BinocularsIcon />} lines={["Найти и", "выделить"]} className="w-[62px]" />
  </Group>
);

const Ribbon = () => (
  <div className="h-[90px] bg-[#bfdbff] px-[2px]">
    <div className="flex h-full gap-[3px] rounded-b-[4px] border border-t-0 border-[#8db2e3] border-b-[#a4e4ee] bg-linear-to-b from-[#dbe5f3] via-[#c8d9ee] via-25% to-[#e2f5fd] pt-[2px]">
      <ClipboardGroup />
      <FontGroup />
      <AlignmentGroup />
      <NumberGroup />
      <StylesGroup />
      <CellsGroup />
      <EditingGroup />
    </div>
  </div>
);

const FormulaBar = () => (
  <div className="border-t-2 border-b-3 border-t-[#9ebbdf] border-b-[#dbe7f5] bg-[#dbe7f5]">
    <div className="flex h-[23px] border-y border-[#6f93bd] bg-white">
      <div className="flex w-[213px] items-center pr-[6px]">
        <input
          aria-label="Имя"
          defaultValue="O5"
          className="w-[194px] bg-transparent text-center font-['Liberation_Serif',serif] text-[16px] leading-5 text-black outline-none"
        />
        <svg width="7" height="4" viewBox="0 0 7 4" className="ml-auto">
          <path d="M0 0h7L3.500 4z" fill="#111" />
        </svg>
      </div>
      <div className="flex w-[89px] items-center gap-[9px] rounded-l-full border-r border-l border-[#7b9cc8] bg-linear-to-b from-[#cfe0f6] to-[#a9c3e6] pl-[5px]">
        <span className="mr-1 size-[9px] rounded-full border border-[#dfe9f6] bg-[#9db2d0]" />
        <button type="button" aria-label="Отмена">
          <svg width="11" height="11" viewBox="0 0 11 11"><path d="M1 1l9 9M10 1L1 10" stroke="#4f5866" strokeWidth="1.800" /></svg>
        </button>
        <button type="button" aria-label="Ввод">
          <svg width="14" height="11" viewBox="0 0 14 11"><path d="M1 6l4 4 8-9" fill="none" stroke="#4f5866" strokeWidth="2" /></svg>
        </button>
        <button type="button" aria-label="Вставить функцию" className="font-['Liberation_Serif',serif] text-[15px] leading-4 font-bold text-[#4f5866] italic">
          f<span className="text-[10px]">x</span>
        </button>
      </div>
      <input aria-label="Строка формул" className="min-w-0 flex-1 bg-white px-1 text-[11px] outline-none" />
      <button type="button" aria-label="Развернуть строку формул" className="flex w-4 items-center justify-center border-l border-[#6f93bd] bg-linear-to-b from-[#e6effa] to-[#bcd2ee]">
        <svg width="8" height="9" viewBox="0 0 8 9" fill="none" stroke="#111" strokeWidth="1.500"><path d="M1 1l3 3 3-3M1 5l3 3 3-3" /></svg>
      </button>
    </div>
  </div>
);

/* ---------- sheet ---------- */

const Cell: React.FC<{ cell: CellData; active?: boolean }> = ({ cell, active }) => (
  <td
    colSpan={cell.span}
    className={clsx(
      "border-r border-b p-0 whitespace-nowrap",
      cell.r ? "border-r-black" : "border-r-[#d0d7e5]",
      cell.b ? "border-b-black" : "border-b-[#d0d7e5]",
      cell.big ? "text-[16px]" : cell.plain ? "text-[15px]" : "text-[14px]",
      cell.plain ? "font-normal" : "font-bold",
      active && "relative"
    )}
  >
    {cell.text}
    {active && (
      <>
        <input aria-label="O5" autoFocus className="absolute -top-[2px] -left-[2px] h-[21px] w-[57px] border-2 border-black bg-white px-[2px] text-[13px] outline-none" />
        <span className="absolute -right-[2px] -bottom-[3px] size-1 bg-black outline outline-white" />
      </>
    )}
  </td>
);

const rowCells = (row: number): CellData[] => {
  const head = DATA[row] || [];
  const used = head.reduce((n, c) => n + (c.span || 1), 0);
  return [...head, ...Array.from({ length: COLUMNS.length - used }, () => ({}))];
};

// O is the 15th column; row 5 holds one merged cell of four columns
const ACTIVE_ROW = 5;
const ACTIVE_INDEX = 11;

const Sheet = () => (
  <div className="flex flex-1 bg-[#b7cdea]">
    <div className="min-w-0 flex-1 overflow-hidden bg-white">
      <table className="-mb-px w-full table-fixed border-separate border-spacing-0 text-center">
        <colgroup>
          <col className="w-[23px]" />
          {COLUMNS.map(c => <col key={c} className={COLUMN_WIDTHS[c] || "w-[54px]"} />)}
          <col />
        </colgroup>
        <thead>
          <tr className="h-[17px] text-[11px] leading-[15px] text-[#2f3f55]">
            <th aria-label="Выделить все" className="border border-l-0 border-t-[#6f93bd] border-r-[#9eb6ce] border-b-[#9eb6ce] bg-[#a9c4e9] p-0">
              <svg width="22" height="15" viewBox="0 0 22 15" className="block"><path d="M18 4v9H9z" fill="#dfeafa" /></svg>
            </th>
            {COLUMNS.map(c => (
              <th
                key={c}
                scope="col"
                className={clsx(
                  "border-y border-r border-t-[#6f93bd] bg-linear-to-b p-0 font-normal",
                  c === "O" ? "border-r-[#f29536] border-b-[#f29536] from-[#f9d99f] to-[#f1c15f]" : "border-b-[#9eb6ce] from-[#f9fcfd] to-[#d3dbe9]",
                  c === "N" && "border-r-[#f29536]",
                  c !== "O" && c !== "N" && "border-r-[#9eb6ce]"
                )}
              >
                {c}
              </th>
            ))}
            <th className="border-y border-t-[#6f93bd] border-b-[#9eb6ce] bg-[#e4ecf7] p-0" />
          </tr>
        </thead>
        <tbody className="font-['Liberation_Serif',serif] leading-[17px] text-black">
          {ROWS.map(row => (
            <tr key={row} className={ROW_HEIGHTS[row] || "h-[18px]"}>
              <th
                scope="row"
                className={clsx(
                  "border-r border-b p-0 align-bottom font-['Open_Sans',sans-serif] text-[11px] leading-[14px] font-normal text-[#2f3f55]",
                  row === ACTIVE_ROW ? "border-[#f29536] bg-[#ffd58d]" : "border-[#9eb6ce] bg-[#e4ecf7]"
                )}
              >
                {row}
              </th>
              {rowCells(row).map((cell, i) => (
                <Cell key={i} cell={cell} active={row === ACTIVE_ROW && i === ACTIVE_INDEX} />
              ))}
              <td className="border-b border-[#d0d7e5] p-0" />
            </tr>
          ))}
        </tbody>
      </table>
    </div>
    <div className="mr-1 flex w-[15px] flex-col items-center border-t border-[#6f93bd] bg-linear-to-r from-[#6e8fbd] to-[#86a5d0]">
      <div className="flex h-2 w-full items-center justify-center border border-[#6f93bd] bg-white"><span className="h-px w-2 bg-[#3f6fb5]" /></div>
      <button type="button" aria-label="Прокрутить вверх" className="flex h-[17px] items-center"><svg width="9" height="5" viewBox="0 0 9 5"><path d="M0 5h9L4.500 0z" fill="#3c4f7a" /></svg></button>
      <div className="flex h-[21px] w-full flex-col items-center justify-center gap-[2px] rounded-sm border border-[#51688f] bg-linear-to-r from-[#f4f5f8] to-[#bcc9da]">
        {[0, 1, 2, 3].map(n => <span key={n} className="h-px w-2 bg-[#6c7a90]" />)}
      </div>
      <button type="button" aria-label="Прокрутить вниз" className="mt-auto flex h-4 items-center"><svg width="9" height="5" viewBox="0 0 9 5"><path d="M0 0h9L4.500 5z" fill="#3c4f7a" /></svg></button>
    </div>
  </div>
);

const NAV = [
  { label: "Первый лист", d: "M1 1v8M8 1v8L3 5z" },
  { label: "Предыдущий лист", d: "M6 1v8L1 5z" },
  { label: "Следующий лист", d: "M2 1v8l5-4z" },
  { label: "Последний лист", d: "M1 1v8l5-4zM8 1v8" },
];

const SheetBar = () => (
  <div className="flex h-[18px] border-t border-b border-t-[#a9c0e0] border-b-[#5b83bb] bg-linear-to-b from-[#7c9ccb] to-[#a5bde2]">
    <div className="flex w-[62px] items-center gap-[6px] bg-[#cfe0f7] pl-1">
      {NAV.map(n => (
        <button key={n.label} type="button" aria-label={n.label}>
          <svg width="9" height="8" viewBox="0 0 9 10" fill="#15428b" stroke="#15428b"><path d={n.d} strokeWidth="1" /></svg>
        </button>
      ))}
    </div>
    <button type="button" className="bg-linear-to-b from-white to-[#e3effe] px-[10px] pt-px text-[12px] leading-[15px] font-bold whitespace-nowrap text-[#15428b]">
      Симплек - задача
    </button>
    <button type="button" aria-label="Вставить лист" className="-ml-[3px]">
      <svg width="46" height="16" viewBox="0 0 46 16">
        <path d="M0 0h11L0 16z" fill="#fff" />
        <path d="M0 16L11 .500h34L34 16z" fill="#cddff6" stroke="#7795c4" />
        <path d="M17 4h9v7l-2 2h-7z" fill="#f8fbff" stroke="#7b8aa3" />
        <path d="M15 1v7M11.500 4.500h7M12.500 2l5 5M17.500 2l-5 5" stroke="#e59a2e" />
      </svg>
    </button>
    <div className="ml-auto flex w-[780px] bg-[#7d9bc6]">
      <div className="w-[7px] border border-[#6f93bd] bg-white" />
      <button type="button" aria-label="Прокрутить влево" className="flex w-[18px] items-center justify-center"><svg width="5" height="9" viewBox="0 0 5 9"><path d="M5 0v9L0 4.500z" fill="#3c4f7a" /></svg></button>
      <div className="flex w-[618px] items-center justify-center gap-px rounded-sm border border-[#51688f] bg-linear-to-b from-[#f4f5f8] from-40% to-[#aabbd0]">
        {[0, 1, 2, 3].map(n => <span key={n} className="h-[7px] w-px bg-[#6c7a90]" />)}
      </div>
      <button type="button" aria-label="Прокрутить вправо" className="ml-auto flex w-[19px] items-center justify-center"><svg width="5" height="9" viewBox="0 0 5 9"><path d="M0 0v9l5-4.500z" fill="#3c4f7a" /></svg></button>
      <div className="mr-5 w-[7px] border border-[#6f93bd] bg-white" />
    </div>
  </div>
);

const StatusBar = () => (
  <footer className="flex h-[21px] items-stretch border-t border-white bg-linear-to-b from-[#d7e6f9] from-30% via-[#b3d0f5] via-35% to-[#d3e4fb] text-[11px] leading-[18px] text-[#15224f]">
    <span className="w-[62px] border-r border-[#9ebbe0] pl-[7px]">Правка</span>
    <div className="ml-auto flex w-[245px] items-center border-l border-[#7b9cd0] bg-linear-to-b from-[#b9d2f4] via-[#8fb4e6] via-50% to-[#7ea6de] pl-[5px]">
      <div className="flex h-[18px] w-14 divide-x divide-[#b0b8c4] rounded-sm border border-[#7f8fa8] bg-[#dcdcdc]">
        <button type="button" aria-label="Обычный" className="flex flex-1 items-center justify-center">
          <svg width="13" height="11" viewBox="0 0 13 11" fill="#fff" stroke="#666"><path d="M.5.500h12v10H.500zM.5 3.500h12M.5 7.500h12M4.500.500v10M8.500.500v10" /></svg>
        </button>
        <button type="button" aria-label="Разметка страницы" className="flex flex-1 items-center justify-center">
          <svg width="13" height="12" viewBox="0 0 13 12" fill="#aaa" stroke="#666"><path d="M.5.500h12v11H.500z" /><path d="M3.500 2.500h6v7h-6z" fill="#fff" /><path d="M5 4.500h3M5 6.500h3" /></svg>
        </button>
        <button type="button" aria-label="Страничный" className="flex flex-1 items-center justify-center">
          <svg width="13" height="12" viewBox="0 0 13 12" fill="#aaa" stroke="#666"><path d="M.5.500h12v11H.500z" /><path d="M.5.500h4v6h-4zM4.500.500h4v6h-4z" fill="#fff" /></svg>
        </button>
      </div>
      <span className="w-[45px] pl-2 text-[#8096b5]">85%</span>
      <button type="button" aria-label="Уменьшить"><svg width="16" height="16" viewBox="0 0 16 16"><circle cx="8" cy="8" r="7" fill="#dce8f8" stroke="#54709e" /><path d="M4 8h8" stroke="#3c4f7a" strokeWidth="2" /></svg></button>
      <div className="flex h-2 flex-1 items-center justify-center bg-linear-to-b from-transparent from-45% via-[#dbe8fa] via-50% to-transparent to-60%"><span className="h-2 w-px bg-white" /></div>
      <button type="button" aria-label="Увеличить" className="mr-[5px]"><svg width="16" height="16" viewBox="0 0 16 16"><circle cx="8" cy="8" r="7" fill="#dce8f8" stroke="#54709e" /><path d="M4 8h8M8 4v8" stroke="#3c4f7a" strokeWidth="2" /></svg></button>
    </div>
  </footer>
);

/* ---------- taskbar ---------- */

const StartIcon = () => (
  <svg width="38" height="38" viewBox="0 0 38 38">
    <defs>
      <radialGradient id="start" cy=".85">
        <stop offset="0" stopColor="#2fd3f7" />
        <stop offset=".5" stopColor="#1b6f9e" />
        <stop offset="1" stopColor="#16395c" />
      </radialGradient>
    </defs>
    <circle cx="19" cy="19" r="17.500" fill="url(#start)" stroke="#a9cbe0" />
    <path d="M3 17a16 16 0 0 1 32 0q-16-6-32 0z" fill="#b9d4e6" opacity=".55" />
    <path d="M11 11q4-3 8-1l-2 8q-4-2-8 1z" fill="#ec5a24" />
    <path d="M20 10q4 3 9 0l-2 8q-4 3-9 0z" fill="#8cc63e" />
    <path d="M9 20q4-3 8-1l-2 8q-4-2-8 1z" fill="#3fa4e8" />
    <path d="M18 19q4 3 9 0l-2 8q-4 3-9 0z" fill="#fcc72c" />
  </svg>
);

const OperaIcon = () => (
  <svg width="32" height="36" viewBox="0 0 32 36">
    <path
      fillRule="evenodd"
      d="M16 2C8 2 2 8 2 17s6 15 14 15 14-6 14-15S24 2 16 2zM16 5c4 0 5 5 5 12s-1 12-5 12-5-5-5-12 1-12 5-12z"
      fill="#d8222a"
      stroke="#b51219"
    />
    <path d="M5 12Q8 4 15 4" fill="none" stroke="#f58080" strokeWidth="2" />
  </svg>
);

const IeIcon = () => (
  <svg width="34" height="34" viewBox="0 0 34 34" fill="none">
    <path d="M27 23q-3 6-10 6C9 29 6 24 6 18S10 7 17 7s11 5 11 11H11" stroke="#2296d8" strokeWidth="7" />
    <path d="M27 23q-3 6-10 6C9 29 6 24 6 18S10 7 17 7s11 5 11 11H11" stroke="#6fcdf6" strokeWidth="5" />
    <path d="M5 32C-2 28 8 10 22 4c8-3 10 0 8 6" stroke="#f3c624" strokeWidth="3" />
  </svg>
);

const ExplorerIcon = () => (
  <svg width="34" height="34" viewBox="0 0 34 34">
    <path d="M2 4h12l2 3h15v22H2z" fill="#e9c766" stroke="#c59f45" />
    <path d="M4 3h8v2H4z" fill="#35a84a" />
    <path d="M12 5h7v2h-7z" fill="#d65136" />
    <path d="M21 7h7v2h-7z" fill="#3b8fd9" />
    <path d="M2 11h29v18H2z" fill="#f8e6a0" stroke="#d9b95e" />
    <path d="M6 33V22h23v11h-5v-6H11v6z" fill="#a9d6f2" stroke="#5fa6d5" />
  </svg>
);

const PlayerIcon = () => (
  <svg width="32" height="32" viewBox="0 0 32 32">
    <path d="M12 3h16v26H12z" fill="#85bbdc" stroke="#5b98bf" />
    <path d="M8 3h16v26H8z" fill="#9acae6" stroke="#5b98bf" />
    <path d="M2 3h17v26H2z" fill="#b6dcf0" stroke="#5b98bf" />
    <circle cx="12" cy="16" r="9" fill="#f47b20" stroke="#fcd0a6" />
    <path d="M9 10v12l9-6z" fill="#fff" />
  </svg>
);

const ChromeIcon = () => (
  <svg width="30" height="32" viewBox="0 0 30 32">
    <path d="M15 16L3 8a14 15 0 0 1 25 2H15z" fill="#dd3b2d" />
    <path d="M15 16l13-6a14 15 0 0 1-14 21z" fill="#f9cf2b" />
    <path d="M15 16l-1 15A14 15 0 0 1 3 8z" fill="#3fa648" />
    <circle cx="15" cy="16" r="7" fill="#fff" />
    <circle cx="15" cy="16" r="5.500" fill="#3b7de0" />
  </svg>
);

const ExcelIcon = () => (
  <svg width="34" height="36" viewBox="0 0 34 36">
    <path d="M2 30V8q0-6 6-6h20v4" fill="#e8f5e0" stroke="#4a9c2f" strokeWidth="2" />
    <path d="M6 6l24 2v26L6 31z" fill="#f7fbf5" stroke="#8db67f" />
    <path d="M21 13h3v4h-3zM25 13h4v4h-4zM21 19h3v4h-3zM25 19h4v4h-4zM19 25h5v4h-5zM25 25h4v4h-4zM8 25h4v4H8zM13 25h5v4h-5z" fill="#6fb155" />
    <path d="M7 10h4l2 4 3-4h4l-5 6 5 7h-4l-3-4-3 4H7l4-7z" fill="#1e5c26" />
  </svg>
);

const WordIcon = () => (
  <svg width="34" height="36" viewBox="0 0 34 36">
    <path d="M2 30V8q0-6 6-6h20v4" fill="#dfeafa" stroke="#2c5bb0" strokeWidth="2" />
    <path d="M8 5l23 3v24L8 30z" fill="#f8fbff" stroke="#8ea8d3" />
    <path d="M24 12h5M24 16h5M22 20h7M12 24h17M12 28h17" stroke="#3a68b5" strokeWidth="2" />
    <path d="M11 10l2 9 3-7 2 7 3-9" fill="none" stroke="#254f9e" strokeWidth="2" />
  </svg>
);

const RedEyeIcon = () => (
  <svg width="32" height="32" viewBox="0 0 32 32">
    <rect x="1" y="1" width="27" height="30" rx="2" fill="#e3142c" />
    <path d="M28 4h-9L6 16l13 12h9v-4a8 8 0 0 1 0-16z" fill="#fff" />
    <circle cx="23" cy="16" r="7" fill="#e3142c" />
  </svg>
);

const ChromiumIcon = () => (
  <svg width="34" height="34" viewBox="0 0 34 34">
    <circle cx="17" cy="17" r="16" fill="#3b6ea8" />
    <path d="M17 17V1a16 16 0 0 1 16 18z" fill="#1d36b0" />
    <path d="M17 17l16 2A16 16 0 0 1 9 31z" fill="#66696e" />
    <path d="M3 10A16 16 0 0 1 17 1v9z" fill="#7ba6d0" />
    <circle cx="17" cy="17" r="7" fill="#2c9df2" stroke="#103a7a" />
    <circle cx="17" cy="15" r="3" fill="#9bdcff" />
  </svg>
);

const TASKS = [
  { name: "Opera", icon: <OperaIcon /> },
  { name: "Internet Explorer", icon: <IeIcon /> },
  { name: "Проводник", icon: <ExplorerIcon />, open: true },
  { name: "Проигрыватель", icon: <PlayerIcon /> },
  { name: "Chrome", icon: <ChromeIcon /> },
  { name: "Excel", icon: <ExcelIcon />, open: true, front: true },
  { name: "Word", icon: <WordIcon />, open: true },
  { name: "Просмотр", icon: <RedEyeIcon /> },
  { name: "Chromium", icon: <ChromiumIcon /> },
];

const Tray = () => (
  <div className="ml-auto flex items-center bg-linear-to-r from-transparent to-[#8a9fb7] to-15% pl-[52px] text-[11px] text-white">
    <span className="w-[31px] pb-1">EN</span>
    <svg width="9" height="5" viewBox="0 0 9 5"><path d="M0 5h9L4.500 0z" fill="#fff" stroke="#56677c" strokeWidth=".5" /></svg>
    <div className="flex items-center gap-[7px] pl-[13px]">
      <svg width="17" height="17" viewBox="0 0 17 17"><path d="M2 1v15M2 2h6l1 2h6l-2 3 1 3H8L7 9H2z" fill="#fff" stroke="#4a5b71" /><path d="M2 1v15" stroke="#fff" strokeWidth="1.500" /></svg>
      <svg width="16" height="15" viewBox="0 0 16 15"><path d="M1 1h14L9 6l6 8H1z" fill="#e01b22" /><path d="M1 14l4-4 3-1 7-8v2L4 14z" fill="#f8f8f8" /><path d="M9 10h6v4H9z" fill="#222" /></svg>
      <svg width="17" height="16" viewBox="0 0 17 16"><rect x="4" y="3" width="12" height="9" fill="#7a8fa8" stroke="#fff" strokeWidth="1.500" /><path d="M7 14.500h7M3 1v3M1 1v4h4V1M3 5v10h3" stroke="#fff" fill="none" /></svg>
      <svg width="15" height="16" viewBox="0 0 15 16"><path d="M1 5h3l4-4v14l-4-4H1z" fill="#fff" stroke="#4a5b71" strokeWidth=".7" /><path d="M10 5q2 3 0 6M12 4q3 4 0 8" stroke="#e6eef6" fill="none" /></svg>
    </div>
    <div className="w-[82px] text-center leading-[17px]">
      <div>13:28</div>
      <div>16.10.2014</div>
    </div>
    <button type="button" aria-label="Показать рабочий стол" className="h-full w-[15px] border border-[#4f6379] bg-linear-to-b from-[#b4c5d6] to-[#7b91a9]" />
  </div>
);

const Taskbar = () => (
  <div className="flex h-10 border-t border-[#3f5369] bg-linear-to-r from-[#899db4] from-3% to-[#b2cfea] to-6%">
    <button type="button" aria-label="Пуск" className="flex w-[54px] items-center justify-center">
      <StartIcon />
    </button>
    <div className="flex gap-[2px] pl-[5px]">
      {TASKS.map(task => (
        <button
          key={task.name}
          type="button"
          aria-label={task.name}
          className={clsx(
            "flex w-[60px] items-center justify-center rounded-[3px] border",
            task.open ? "border-[#4d6078] shadow-[inset_0_0_0_1px_#e3edf7]" : "border-transparent",
            task.open && (task.front ? "bg-linear-to-b from-[#e6eff8] to-[#cddff0]" : "bg-[#c0d7ec]")
          )}
        >
          {task.icon}
        </button>
      ))}
    </div>
    <Tray />
  </div>
);

const App: React.FC = () => {
  const [tab, setTab] = useState("Главная");

  return (
    <div className="flex min-h-screen flex-col overflow-hidden bg-[#bfdbff] font-['Open_Sans',sans-serif] text-[11px]">
      <TitleBar />
      <TabStrip active={tab} onSelect={setTab} />
      <Ribbon />
      <FormulaBar />
      <Sheet />
      <SheetBar />
      <StatusBar />
      <Taskbar />
    </div>
  );
};

export default App;
